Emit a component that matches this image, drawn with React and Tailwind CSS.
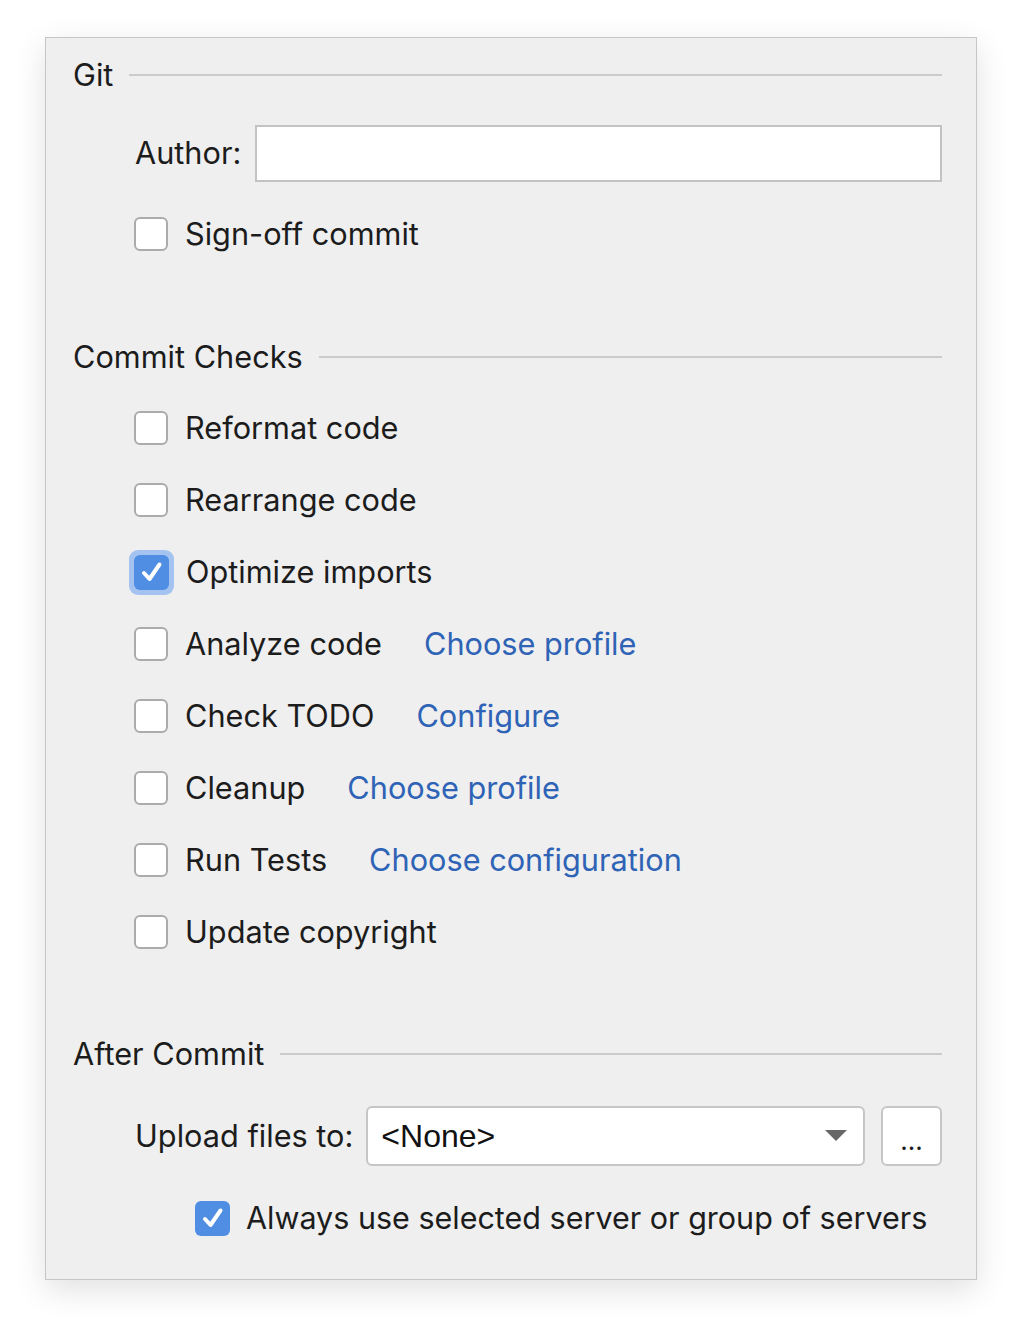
import React from 'react';

const font = { fontFamily: 'Inter, "Noto Sans", sans-serif' };

const Checkbox = ({ checked, focused }) => {
    if (checked) {
        return (
            <span className={`flex items-center justify-center rounded-[9px] ${focused ? 'p-[5px] bg-[#a5c3f0] -m-[5px]' : ''}`}>
                <span className="flex h-[35px] w-[35px] items-center justify-center rounded-[6px] bg-[#4f8ee3]">
                    <svg width="26" height="26" viewBox="0 0 26 26" fill="none">
                        <path d="M5 14 L10.5 20 L20.5 5.5" stroke="white" strokeWidth="4" strokeLinecap="round" strokeLinejoin="round" />
                    </svg>
                </span>
            </span>
        );
    }
    return <span className="block h-[34px] w-[34px] rounded-[6px] border-2 border-[#ababab] bg-white" />;
};

const SectionHeader = ({ title }) => (
    <div className="flex h-[40px] items-center">
        <span className="text-[30.7px] text-[#1c1c1c]">{title}</span>
        <span className="ml-[16px] h-[2px] flex-1 bg-[#cbcbcb]" />
    </div>
);

const CheckRow = ({ label, checked, focused, link }) => (
    <div className="flex h-[72px] items-center pl-[61px]">
        <Checkbox checked={checked} focused={focused} />
        <span className="ml-[17px] text-[30.7px] text-[#1c1c1c]">{label}</span>
        {link && <a className="ml-[42px] text-[30.7px] text-[#2e63b6]">{link}</a>}
    </div>
);

const checks = [
    { label: 'Reformat code' },
    { label: 'Rearrange code' },
    { label: 'Optimize imports', checked: true, focused: true },
    { label: 'Analyze code', link: 'Choose profile' },
    { label: 'Check TODO', link: 'Configure' },
    { label: 'Cleanup', link: 'Choose profile' },
    { label: 'Run Tests', link: 'Choose configuration' },
    { label: 'Update copyright' },
];

export default function App() {
    return (
        <div className="min-h-[1334px] bg-white pl-[45px] pt-[37px]" style={font}>
            <div className="h-[1243px] w-[932px] border border-[#c6c6c6] bg-[#efefef] pl-[27px] pr-[34px] pt-[17px] shadow-[0_10px_30px_rgba(0,0,0,0.12)]">
                {/* Git */}
                <SectionHeader title="Git" />
                <div className="mt-[30px] flex h-[57px] items-center pl-[62px]">
                    <span className="text-[30.7px] text-[#1c1c1c]">Author:</span>
                    <div className="ml-[14px] h-[57px] flex-1 border-2 border-[#c3c3c3] bg-white" />
                </div>
                <div className="mt-[35px] flex h-[34px] items-center pl-[61px]">
                    <Checkbox />
                    <span className="ml-[17px] text-[30.7px] text-[#1c1c1c]">Sign-off commit</span>
                </div>

                {/* Commit Checks */}
                <div className="mt-[86px]">
                    <SectionHeader title="Commit Checks" />
                </div>
                <div className="mt-[15px]">
                    {checks.map(c => (
                        <CheckRow key={c.label} {...c} />
                    ))}
                </div>

                {/* After Commit */}
                <div className="mt-[66px]">
                    <SectionHeader title="After Commit" />
                </div>
                <div className="mt-[32px] flex h-[60px] items-center pl-[62px]">
                    <span className="text-[30.7px] text-[#1c1c1c]">Upload files to:</span>
                    <div className="ml-[13px] flex h-[60px] flex-1 items-center justify-between rounded-[6px] border-2 border-[#c6c6c6] bg-white pl-[13px] pr-[16px]">
                        <span className="text-[32px] text-[#111]" style={{ fontFamily: '"Liberation Sans", Arial, sans-serif' }}>&lt;None&gt;</span>
                        <svg width="22" height="12" viewBox="0 0 22 12">
                            <path d="M0 0 H22 L11 11 Z" fill="#666" />
                        </svg>
                    </div>
                    <div className="ml-[16px] flex h-[60px] w-[61px] items-center justify-center rounded-[6px] border-2 border-[#c6c6c6] bg-white pt-[8px] text-[26px] text-[#1c1c1c]">
                        ...
                    </div>
                </div>
                <div className="mt-[34px] flex h-[36px] items-center pl-[122px]">
                    <Checkbox checked />
                    <span className="ml-[16px] text-[30.5px] text-[#1c1c1c]">Always use selected server or group of servers</span>
                </div>
            </div>
        </div>
    );
}
